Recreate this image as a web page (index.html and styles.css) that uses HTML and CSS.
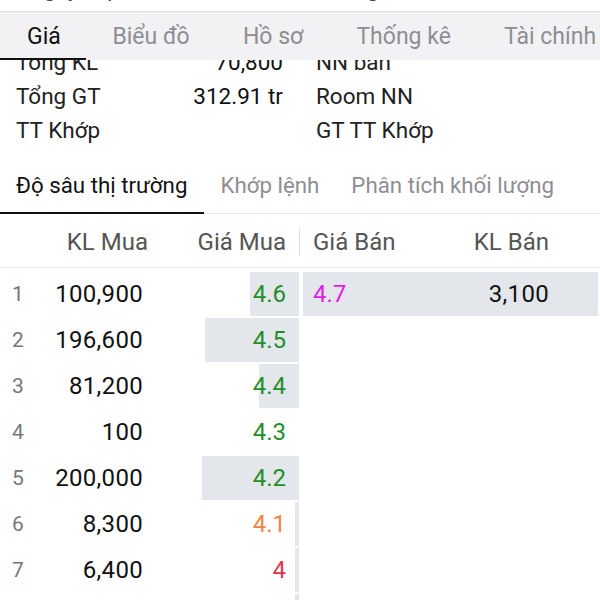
FILE: index.html
```html
<!DOCTYPE html>
<html lang="vi">
<head>
<meta charset="utf-8">
<link rel="stylesheet" href="styles.css">
</head>
<body>
<div class="screen">
  <div class="cutline"><span class="cut-text">Ngày cập nhật lúc 15:00 — Giá đóng cửa tham chiếu lúc đầu phiên</span></div>

  <nav class="tabs">
    <div class="tab active">Giá</div>
    <div class="tab">Biểu đồ</div>
    <div class="tab">Hồ sơ</div>
    <div class="tab">Thống kê</div>
    <div class="tab">Tài chính</div>
  </nav>

  <section class="info">
    <div class="info-label">Tổng KL</div><div class="info-value">70,800</div><div class="info-label info-right">NN bán</div>
    <div class="info-label">Tổng GT</div><div class="info-value">312.91 tr</div><div class="info-label info-right">Room NN</div>
    <div class="info-label">TT Khớp</div><div class="info-value"></div><div class="info-label info-right">GT TT Khớp</div>
  </section>

  <nav class="subtabs">
    <div class="subtab active">Độ sâu thị trường</div>
    <div class="subtab">Khớp lệnh</div>
    <div class="subtab">Phân tích khối lượng</div>
  </nav>

  <div class="book-head">
    <div></div>
    <div class="h-right">KL Mua</div>
    <div class="h-bid">Giá Mua</div>
    <div class="h-ask"><span>Giá Bán</span><span>KL Bán</span></div>
  </div>

  <div class="book">
    <div class="row">
      <div class="num">1</div><div class="vol">100,900</div>
      <div class="bid green" style="--w:49px">4.6</div>
      <div class="ask" style="--w:295px"><span class="magenta">4.7</span><span class="vol-ask">3,100</span></div>
    </div>
    <div class="row">
      <div class="num">2</div><div class="vol">196,600</div>
      <div class="bid green" style="--w:94px">4.5</div>
      <div class="ask"></div>
    </div>
    <div class="row">
      <div class="num">3</div><div class="vol">81,200</div>
      <div class="bid green" style="--w:40px">4.4</div>
      <div class="ask"></div>
    </div>
    <div class="row">
      <div class="num">4</div><div class="vol">100</div>
      <div class="bid green" style="--w:0px">4.3</div>
      <div class="ask"></div>
    </div>
    <div class="row">
      <div class="num">5</div><div class="vol">200,000</div>
      <div class="bid green" style="--w:97px">4.2</div>
      <div class="ask"></div>
    </div>
    <div class="row">
      <div class="num">6</div><div class="vol">8,300</div>
      <div class="bid orange" style="--w:4px">4.1</div>
      <div class="ask"></div>
    </div>
    <div class="row">
      <div class="num">7</div><div class="vol">6,400</div>
      <div class="bid red" style="--w:4px">4</div>
      <div class="ask"></div>
    </div>
    <div class="row row-tail">
      <div class="num"></div><div class="vol"></div>
      <div class="bid" style="--w:4px"></div>
      <div class="ask"></div>
    </div>
  </div>
</div>
</body>
</html>
```
FILE: styles.css
```css
* { box-sizing: border-box; }
html, body { margin: 0; padding: 0; background: #fff; }
body { width: 600px; height: 600px; overflow: hidden; font-family: Roboto, "Noto Sans", sans-serif; color: #1c1c1e; }
.screen { width: 600px; height: 600px; overflow: hidden; }

.cutline { height: 11px; overflow: hidden; }
.cut-text { display: block; margin-top: -25px; padding-left: 28px; font-size: 22px; line-height: 28px; color: #444; white-space: nowrap; }

.tabs { position: relative; z-index: 2; display: flex; height: 49px; background: #f2f2f4; border-top: 1px solid #dcdcde; }
.tab { display: flex; align-items: center; padding: 3px 26.6px 0 26.6px; font-size: 23px; color: #8e8e93; border-bottom: 2px solid transparent; white-space: nowrap; }
.tab.active { color: #111; padding-left: 27px; padding-right: 25px; border-bottom-color: #111; }

.info { margin-top: -15px; display: grid; grid-template-columns: 150px 117px 1fr; padding-left: 16px; }
.info > div { height: 34px; display: flex; align-items: center; font-size: 22.5px; white-space: nowrap; }
.info-label { color: #222; }
.info-right { padding-left: 33px; }
.info-value { justify-content: flex-end; color: #111; }

.subtabs { display: flex; margin-top: 13px; height: 54px; border-bottom: 1px solid #e6e6e8; }
.subtab { display: flex; align-items: center; padding: 0 16px 2px; font-size: 22.3px; color: #8e8e93; border-bottom: 2px solid transparent; margin-bottom: -1px; white-space: nowrap; }
.subtab.active { color: #111; padding-right: 17px; border-bottom-color: #111; }

.book-head { display: grid; grid-template-columns: 40px 108px 152px 1fr; height: 54px; padding-top: 2px; align-items: center; border-bottom: 1px solid #e8e8ea; font-size: 24px; color: #555; }
.h-right { text-align: right; }
.h-bid { text-align: right; padding-right: 13px; border-right: 1px solid #e2e2e4; line-height: 28px; }
.h-ask { display: flex; justify-content: space-between; padding: 0 51px 0 13px; }

.book { padding-top: 4px; display: grid; row-gap: 2px; }
.row { display: grid; grid-template-columns: 40px 108px 151px 1fr; height: 44px; align-items: center; font-size: 24px; }
.num { padding-left: 12px; color: #777; font-size: 21px; }
.vol { text-align: right; padding-right: 5px; color: #111; letter-spacing: 0.3px; }
.bid { height: 44px; display: flex; align-items: center; justify-content: flex-end; padding-right: 13px;
  background: linear-gradient(#e3e6ea, #e3e6ea) right / var(--w, 0px) 100% no-repeat; }
.ask { height: 44px; margin-left: 4px; display: flex; align-items: center; justify-content: space-between; padding: 0 51px 0 10px;
  background: linear-gradient(#e3e6ea, #e3e6ea) left / var(--w, 0px) 100% no-repeat; }
.vol-ask { color: #111; letter-spacing: 0.3px; }
.green { color: #1f8f2a; }
.orange { color: #f28442; }
.red { color: #e2354a; }
.magenta { color: #e21ce6; }
```
